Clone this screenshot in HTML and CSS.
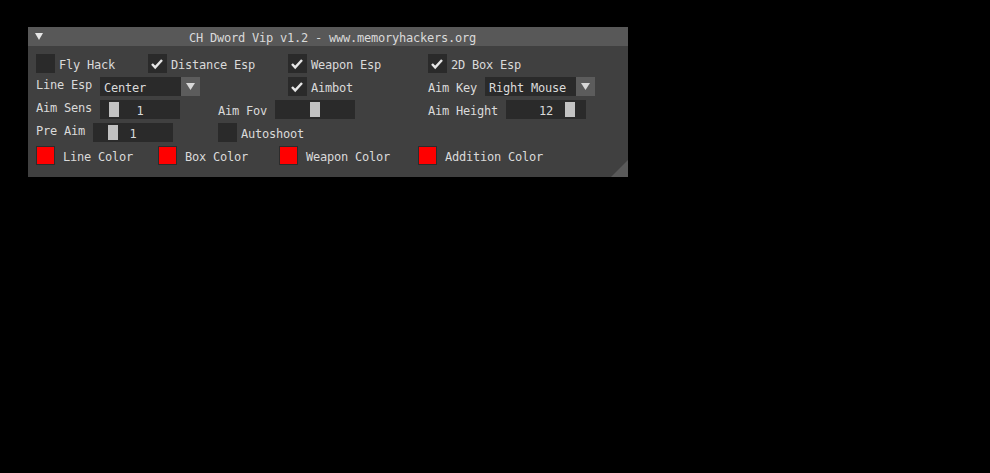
FILE: index.html
```html
<!DOCTYPE html>
<html>
<head>
<meta charset="utf-8">
<link rel="stylesheet" href="styles.css">
</head>
<body>
<div class="window">
  <div class="titlebar">
    <svg class="collapse" width="19" height="19" viewBox="0 0 19 19"><polygon points="7,6 15,6 11,13" fill="#e6e6e6"/></svg>
    <span class="title">CH Dword Vip v1.2 - www.memoryhackers.org</span>
  </div>
  <div class="content">
    <div class="row">
      <div class="cell w112"><span class="check"></span><span class="flbl">Fly Hack</span></div>
      <div class="cell w140"><span class="check on"><svg width="19" height="19" viewBox="0 0 19 19"><polyline points="4,10 7.2,13.4 14,6" fill="none" stroke="#e6e6e6" stroke-width="2.4"/></svg></span><span class="flbl">Distance Esp</span></div>
      <div class="cell w140"><span class="check on"><svg width="19" height="19" viewBox="0 0 19 19"><polyline points="4,10 7.2,13.4 14,6" fill="none" stroke="#e6e6e6" stroke-width="2.4"/></svg></span><span class="flbl">Weapon Esp</span></div>
      <div class="cell"><span class="check on"><svg width="19" height="19" viewBox="0 0 19 19"><polyline points="4,10 7.2,13.4 14,6" fill="none" stroke="#e6e6e6" stroke-width="2.4"/></svg></span><span class="flbl">2D Box Esp</span></div>
    </div>
    <div class="row">
      <div class="cell w64"><span class="lbl">Line Esp</span></div>
      <div class="cell w188"><div class="combo w100"><span class="ctext">Center</span><span class="cbtn"><svg width="19" height="19" viewBox="0 0 19 19"><polygon points="5,6 14,6 9.5,13" fill="#d8d8d8"/></svg></span></div></div>
      <div class="cell w140"><span class="check on"><svg width="19" height="19" viewBox="0 0 19 19"><polyline points="4,10 7.2,13.4 14,6" fill="none" stroke="#e6e6e6" stroke-width="2.4"/></svg></span><span class="flbl">Aimbot</span></div>
      <div class="cell w57"><span class="albl">Aim Key</span></div>
      <div class="cell"><div class="combo w110"><span class="ctext">Right Mouse</span><span class="cbtn"><svg width="19" height="19" viewBox="0 0 19 19"><polygon points="5,6 14,6 9.5,13" fill="#d8d8d8"/></svg></span></div></div>
    </div>
    <div class="row">
      <div class="cell w64"><span class="lbl">Aim Sens</span></div>
      <div class="cell w118"><div class="slider"><span class="grab" style="left:9px"></span><span class="sval">1</span></div></div>
      <div class="cell w57"><span class="albl">Aim Fov</span></div>
      <div class="cell w153"><div class="slider"><span class="grab" style="left:35px"></span><span class="sval"></span></div></div>
      <div class="cell w78"><span class="albl">Aim Height</span></div>
      <div class="cell"><div class="slider"><span class="grab" style="left:59px"></span><span class="sval">12</span></div></div>
    </div>
    <div class="row">
      <div class="cell w57"><span class="lbl">Pre Aim</span></div>
      <div class="cell w125"><div class="slider"><span class="grab" style="left:15px"></span><span class="sval">1</span></div></div>
      <div class="cell"><span class="check"></span><span class="flbl">Autoshoot</span></div>
    </div>
    <div class="row">
      <div class="cell w122"><span class="swatch"></span><span class="clbl">Line Color</span></div>
      <div class="cell w121"><span class="swatch"></span><span class="clbl">Box Color</span></div>
      <div class="cell w139"><span class="swatch"></span><span class="clbl">Weapon Color</span></div>
      <div class="cell"><span class="swatch"></span><span class="clbl">Addition Color</span></div>
    </div>
  </div>
  <svg class="grip" width="17" height="17" viewBox="0 0 17 17"><polygon points="17,0 17,17 0,17" fill="#5a5a5a"/></svg>
</div>
</body>
</html>
```
FILE: styles.css
```css
html, body {
  margin: 0;
  padding: 0;
  background: #000;
}
body {
  font-family: "DejaVu Sans Mono", "Liberation Mono", monospace;
  font-size: 12px;
  letter-spacing: -0.225px;
  line-height: 13px;
  color: #dadada;
}
.window {
  position: relative;
  margin: 27px 0 0 28px;
  width: 600px;
  height: 150px;
  background: #404040;
}
.titlebar {
  position: relative;
  height: 19px;
  background: #585858;
  display: flex;
  align-items: flex-start;
}
.collapse {
  position: absolute;
  left: 0;
  top: 0;
}
.title {
  padding: 5px 0 0 161px;
  white-space: nowrap;
}
.content {
  padding: 8px 0 0 8px;
  display: flex;
  flex-direction: column;
  gap: 4px;
}
.row {
  display: flex;
  height: 19px;
}
.cell {
  display: flex;
  align-items: flex-start;
  flex: none;
  white-space: nowrap;
}
.w57 { width: 57px; }
.w64 { width: 64px; }
.w78 { width: 78px; }
.w112 { width: 112px; }
.w118 { width: 118px; }
.w121 { width: 121px; }
.w122 { width: 122px; }
.w125 { width: 125px; }
.w139 { width: 139px; }
.w140 { width: 140px; }
.w153 { width: 153px; }
.w188 { width: 188px; }
.check {
  display: block;
  width: 19px;
  height: 19px;
  background: #2a2a2a;
  flex: none;
}
.check svg { display: block; }
.flbl {
  padding: 5px 0 0 4px;
}
.lbl {
  padding: 2px 0 0 0;
}
.albl {
  padding: 5px 0 0 0;
}
.combo {
  display: flex;
  height: 19px;
  background: #2a2a2a;
}
.combo.w100 { width: 100px; }
.combo.w110 { width: 110px; }
.ctext {
  flex: 1;
  padding: 5px 0 0 4px;
}
.cbtn {
  width: 19px;
  height: 19px;
  background: #5c5c5c;
  flex: none;
}
.cbtn svg { display: block; }
.slider {
  position: relative;
  width: 80px;
  height: 19px;
  background: #2a2a2a;
  display: flex;
  justify-content: center;
}
.grab {
  position: absolute;
  top: 2px;
  width: 10px;
  height: 15px;
  background: #c2c2c2;
}
.sval {
  position: relative;
  padding-top: 5px;
}
.swatch {
  display: block;
  width: 17px;
  height: 17px;
  background: #ff0000;
  border: 1px solid #2c2c2c;
  flex: none;
}
.clbl {
  padding: 5px 0 0 8px;
}
.grip {
  position: absolute;
  right: 0;
  bottom: 0;
}
```
